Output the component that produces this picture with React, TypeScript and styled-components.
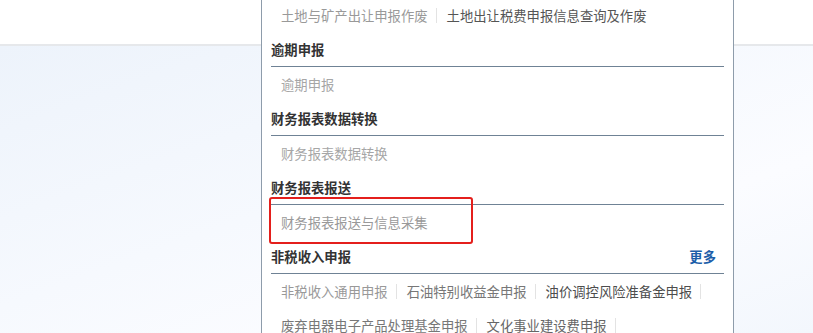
import React from "react";
import styled, { createGlobalStyle } from "styled-components";

const GlobalStyle = createGlobalStyle`
  html, body {
    margin: 0;
    padding: 0;
    width: 813px;
    height: 333px;
    overflow: hidden;
    font-family: "Noto Sans CJK SC", "Noto Sans", sans-serif;
  }
`;

const Page = styled.div`
  position: relative;
  width: 813px;
  height: 333px;
  display: flex;
  flex-direction: column;
  overflow: hidden;
`;

const Header = styled.div`
  height: 44px;
  background: #ffffff;
  border-bottom: 2px solid #e6e8eb;
`;

const Body = styled.div`
  flex: 1;
  background: linear-gradient(160deg, #edf3fb 0%, #f6f9fe 45%, #fbfcff 70%, #f3f7fd 100%);
`;

const Menu = styled.div`
  position: absolute;
  left: 261px;
  top: -2px;
  width: 453px;
  height: 340px;
  background: #ffffff;
  border-left: 1px solid #8e9cab;
  border-right: 1px solid #8e9cab;
  padding: 0 9px;
  box-sizing: content-box;
`;

const Section = styled.div`
  display: flex;
  flex-direction: column;
`;

const Heading = styled.div`
  height: 34px;
  display: flex;
  align-items: center;
  justify-content: space-between;
  border-bottom: 1px solid #6f8295;
  font-size: 13.33px;
  font-weight: 700;
  color: #333333;
`;

const More = styled.a`
  margin-right: 8px;
  color: #1c5ea9;
  font-weight: 700;
  text-decoration: none;
  cursor: pointer;
`;

const Items = styled.div`
  display: flex;
  flex-wrap: wrap;
`;

const Item = styled.a<{ $tone: string; $last?: boolean }>`
  height: 34px;
  display: flex;
  align-items: center;
  font-size: 13.33px;
  color: ${(p) => p.$tone};
  text-decoration: none;
  cursor: pointer;
  white-space: nowrap;
  padding: 0 9px 0 10px;
  position: relative;

  &::after {
    content: "";
    display: ${(p) => (p.$last ? "none" : "block")};
    position: absolute;
    right: 0;
    top: 10px;
    width: 1px;
    height: 15px;
    background: #e3e3e3;
  }
`;

const Highlight = styled.div`
  position: absolute;
  left: 7px;
  top: 199px;
  width: 200px;
  height: 43px;
  border: 2px solid #e41f1c;
  border-radius: 3px;
  pointer-events: none;
`;

type Entry = { label: string; tone: string; last?: boolean };
type Group = { title?: string; more?: boolean; items: Entry[] };

const groups: Group[] = [
  {
    items: [
      { label: "土地与矿产出让申报作废", tone: "#999999" },
      { label: "土地出让税费申报信息查询及作废", tone: "#555555", last: true },
    ],
  },
  { title: "逾期申报", items: [{ label: "逾期申报", tone: "#a6a6a6", last: true }] },
  {
    title: "财务报表数据转换",
    items: [{ label: "财务报表数据转换", tone: "#a6a6a6", last: true }],
  },
  {
    title: "财务报表报送",
    items: [{ label: "财务报表报送与信息采集", tone: "#999999", last: true }],
  },
  {
    title: "非税收入申报",
    more: true,
    items: [
      { label: "非税收入通用申报", tone: "#999999" },
      { label: "石油特别收益金申报", tone: "#777777" },
      { label: "油价调控风险准备金申报", tone: "#4d4d4d" },
      { label: "废弃电器电子产品处理基金申报", tone: "#777777" },
      { label: "文化事业建设费申报", tone: "#666666" },
    ],
  },
];

export default function App() {
  return (
    <Page>
      <GlobalStyle />
      <Header />
      <Body />
      <Menu>
        {groups.map((g, i) => (
          <Section key={i}>
            {g.title && (
              <Heading>
                <span>{g.title}</span>
                {g.more && <More>更多</More>}
              </Heading>
            )}
            <Items>
              {g.items.map((it) => (
                <Item key={it.label} $tone={it.tone} $last={it.last}>
                  {it.label}
                </Item>
              ))}
            </Items>
          </Section>
        ))}
        <Highlight />
      </Menu>
    </Page>
  );
}
